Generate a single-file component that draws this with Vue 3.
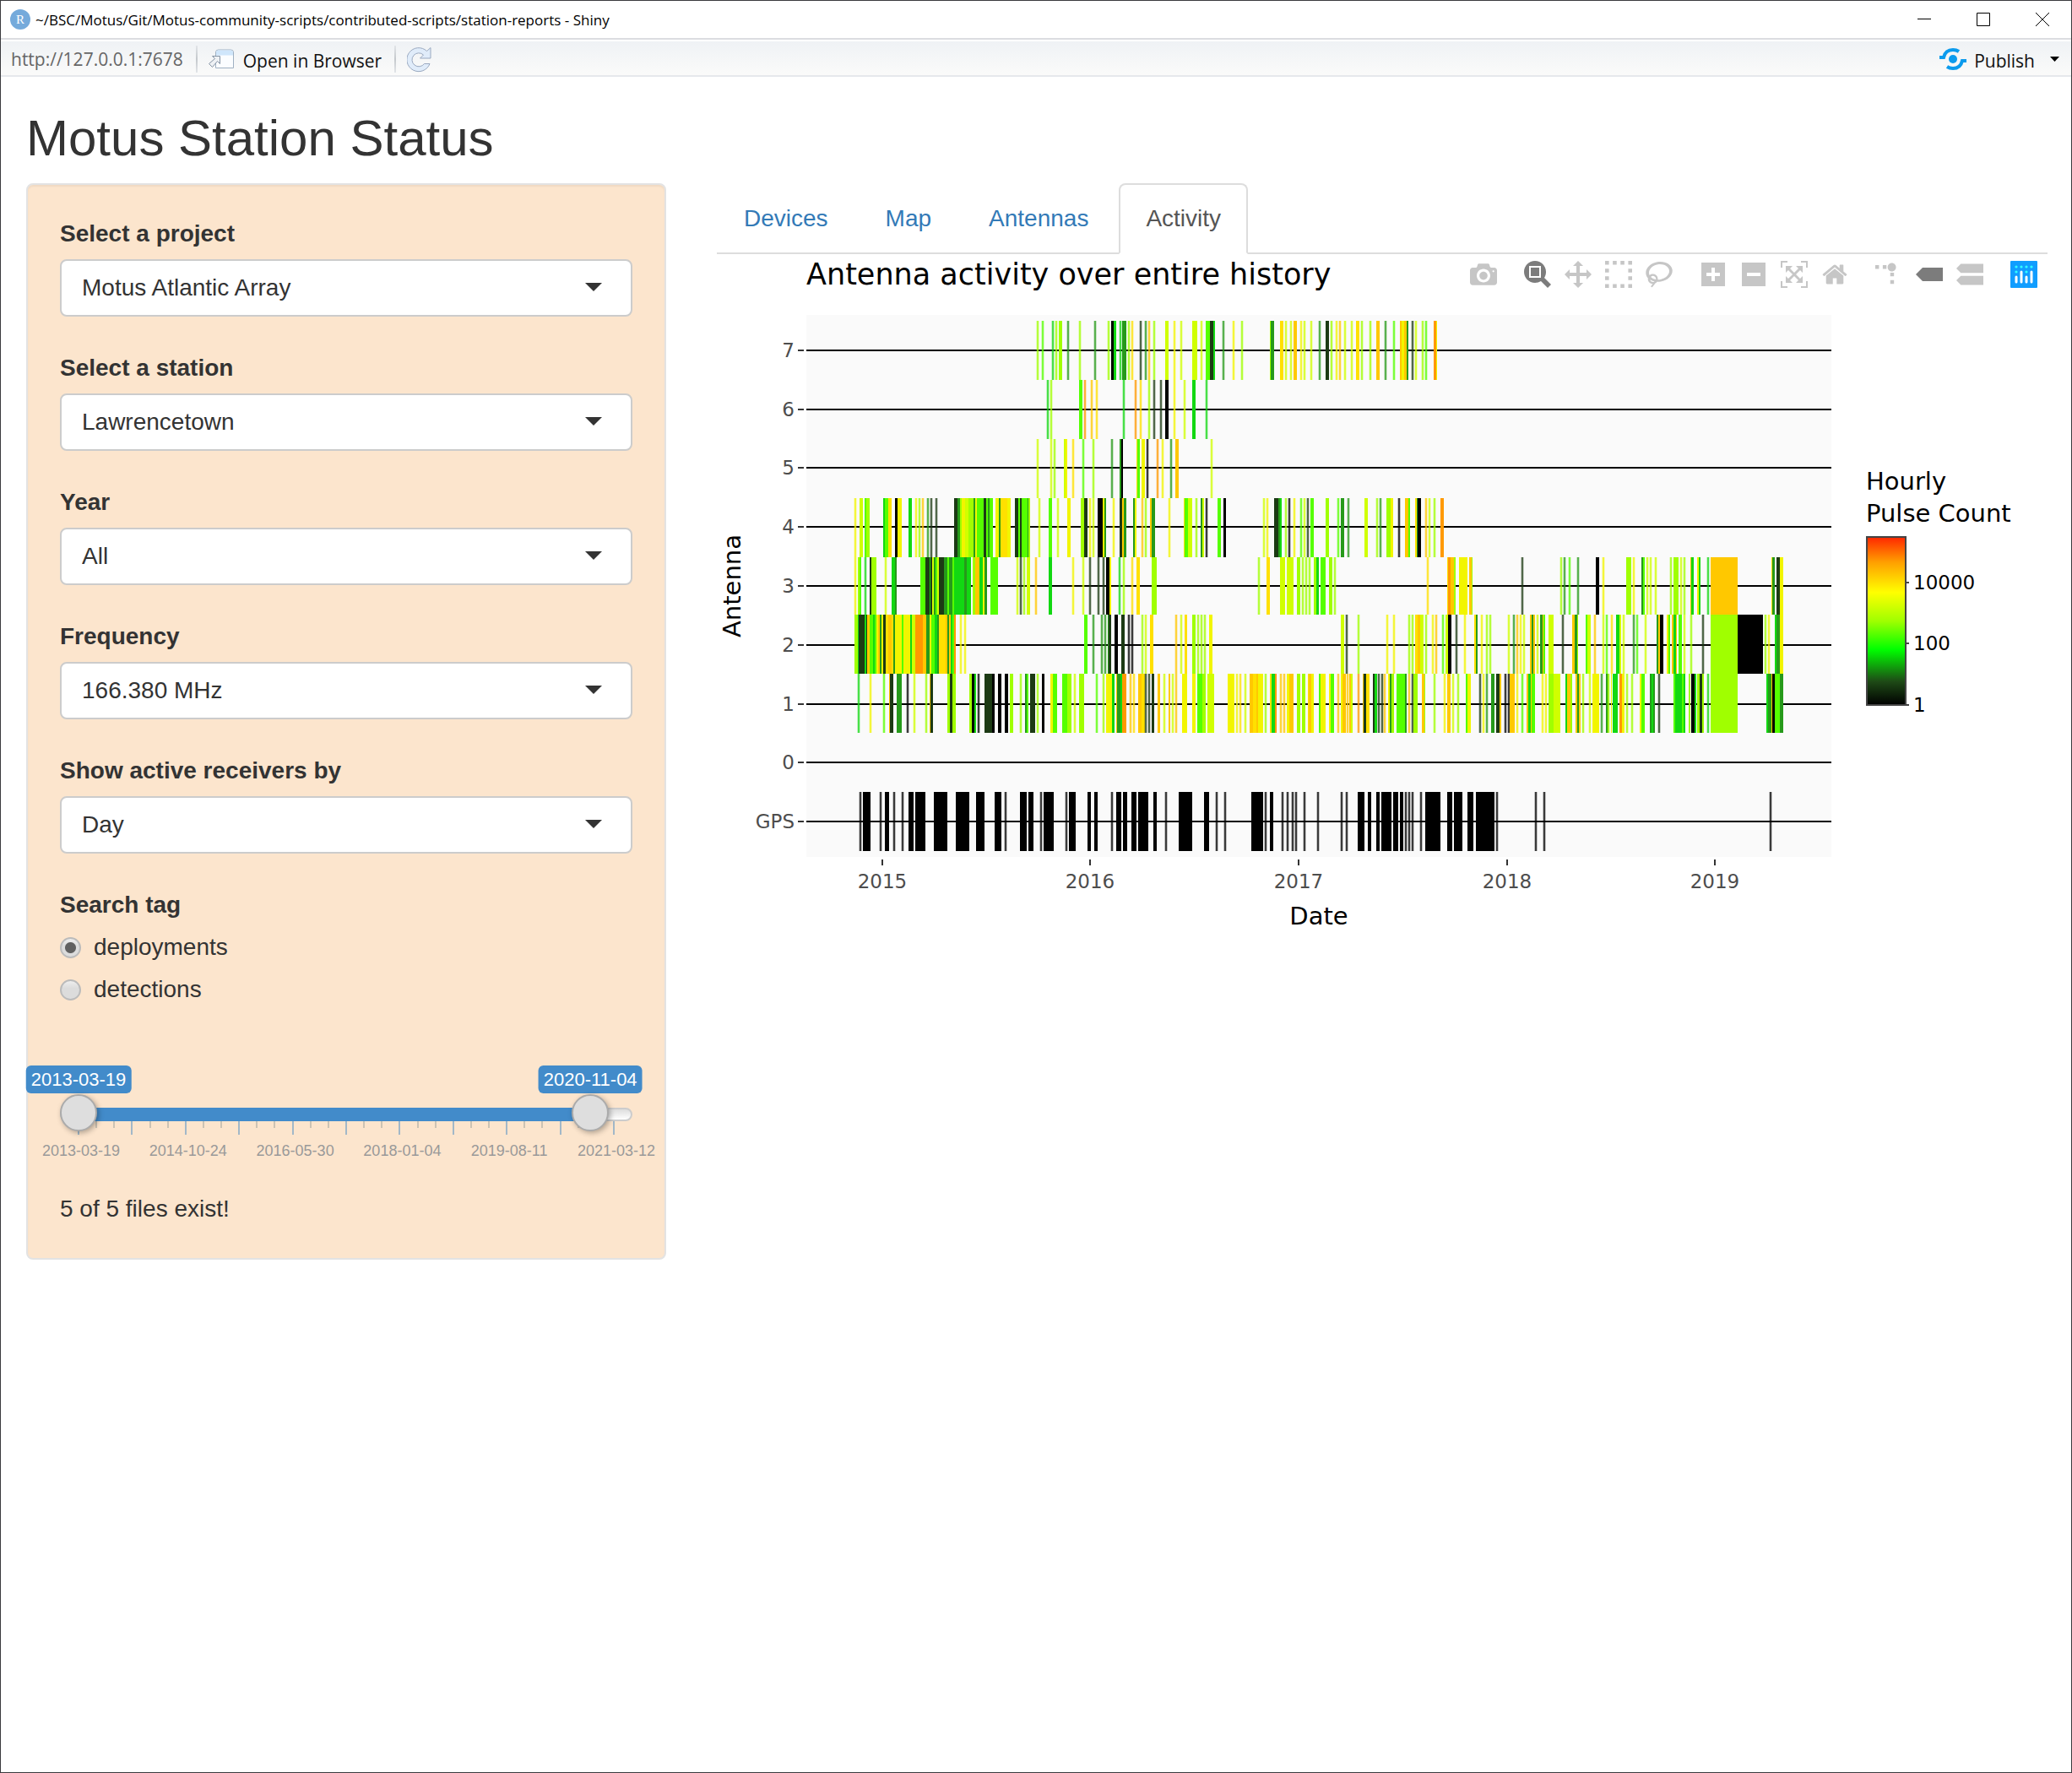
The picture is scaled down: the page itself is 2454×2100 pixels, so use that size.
<script setup>
import { ref, computed } from 'vue'

const fields = [
  { id: 'project', label: 'Select a project', value: 'Motus Atlantic Array' },
  { id: 'station', label: 'Select a station', value: 'Lawrencetown' },
  { id: 'year', label: 'Year', value: 'All' },
  { id: 'frequency', label: 'Frequency', value: '166.380 MHz' },
  { id: 'interval', label: 'Show active receivers by', value: 'Day' },
]

const searchTag = ref('deployments')

/* Date range slider, counted in days since the first date */
const firstDay = Date.UTC(2013, 2, 19)
const totalDays = 2915
const from = ref(0)
const to = ref(2787)
const isoDate = (days) => new Date(firstDay + days * 86400000).toISOString().slice(0, 10)
const share = (days) => days / totalDays
const thumbLeft = (days) => `calc(22px + (100% - 44px) * ${share(days)})`
const rangeStyle = computed(() => ({
  left: thumbLeft(from.value),
  right: `calc(22px + (100% - 44px) * ${1 - share(to.value)})`,
}))
const ticks = Array.from({ length: 31 }, (_, i) => ({ left: (i / 30) * 100 + '%', major: i % 3 === 0 }))
const tickLabels = ['2013-03-19', '2014-10-24', '2016-05-30', '2018-01-04', '2019-08-11', '2021-03-12']

const tabs = ['Devices', 'Map', 'Antennas', 'Activity']
const activeTab = 'Activity'

/* Plot toolbar */
const flip = 'matrix(1 0 0 -1 0 850)'
const modebar = [
  [
    { name: 'Download plot as a png', box: '0 0 1000 1000', t: flip, d: 'm500 450c-83 0-150-67-150-150 0-83 67-150 150-150 83 0 150 67 150 150 0 83-67 150-150 150z m400 150h-120c-16 0-34 13-39 29l-31 93c-6 15-23 28-40 28h-340c-16 0-34-13-39-28l-31-94c-6-15-23-28-40-28h-120c-55 0-100-45-100-100v-450c0-55 45-100 100-100h800c55 0 100 45 100 100v450c0 55-45 100-100 100z m-400-550c-138 0-250 112-250 250 0 138 112 250 250 250 138 0 250-112 250-250 0-138-112-250-250-250z m365 380c-19 0-35 16-35 35 0 19 16 35 35 35 19 0 35-16 35-35 0-19-16-35-35-35z' },
  ],
  [
    { name: 'Zoom', on: true, box: '0 0 1000 1000', t: flip, d: 'm1000-25l-250 251c40 63 63 138 63 218 0 224-182 406-407 406-224 0-406-182-406-406s183-406 407-406c80 0 155 22 218 62l250-250 125 125z m-812 250l0 438 437 0 0-438-437 0z m62 375l313 0 0-312-313 0 0 312z' },
    { name: 'Pan', box: '0 0 1000 1000', t: flip, d: 'm1000 350l-187 188 0-125-250 0 0 250 125 0-188 187-187-187 125 0 0-250-250 0 0 125-188-188 186-187 0 125 252 0 0-250-125 0 187-188 188 188-125 0 0 250 250 0 0-126 187 188z' },
    { name: 'Box Select', box: '0 0 1000 1000', t: flip, d: 'm0 850l0-143 143 0 0 143-143 0z m286 0l0-143 143 0 0 143-143 0z m285 0l0-143 143 0 0 143-143 0z m286 0l0-143 143 0 0 143-143 0z m-857-286l0-143 143 0 0 143-143 0z m857 0l0-143 143 0 0 143-143 0z m-857-285l0-143 143 0 0 143-143 0z m857 0l0-143 143 0 0 143-143 0z m-857-286l0-143 143 0 0 143-143 0z m286 0l0-143 143 0 0 143-143 0z m285 0l0-143 143 0 0 143-143 0z m286 0l0-143 143 0 0 143-143 0z' },
    { name: 'Lasso Select', box: '0 0 1031 1000', t: flip, d: 'm1018 538c-36 207-290 336-568 286-277-48-473-256-436-463 10-57 36-108 76-151-13-66 11-137 68-183 34-28 75-41 114-42l-55-70 0 0c-2-1-3-2-4-3-10-14-8-34 5-45 14-11 34-8 45 4 1 1 2 3 2 5l0 0 113 140c16 11 31 24 45 40 4 3 6 7 8 11 48-3 100 0 151 9 278 48 473 255 436 462z m-624-379c-80 14-149 48-197 96 42 42 109 47 156 9 33-26 47-66 41-105z m-187-74c-19 16-33 37-39 60 50-32 109-55 174-68-42-25-95-24-135 8z m360 75c-34-7-69-9-102-8 8 62-16 128-68 170-73 59-175 54-244-5-9 20-16 40-20 61-28 159 121 317 333 354s407-60 434-217c28-159-121-318-333-355z' },
  ],
  [
    { name: 'Zoom in', box: '0 0 875 1000', t: flip, d: 'm1 787l0-875 875 0 0 875-875 0z m687-500l-187 0 0-187-125 0 0 187-188 0 0 125 188 0 0 187 125 0 0-187 187 0 0-125z' },
    { name: 'Zoom out', box: '0 0 875 1000', t: flip, d: 'm0 788l0-876 875 0 0 876-875 0z m688-500l-500 0 0 125 500 0 0-125z' },
    { name: 'Autoscale', box: '0 0 1000 1000', t: flip, d: 'm250 850l-187 0-63 0 0-62 0-188 63 0 0 188 187 0 0 62z m688 0l-188 0 0-62 188 0 0-188 62 0 0 188 0 62-62 0z m-875-938l0 188-63 0 0-188 0-62 63 0 187 0 0 62-187 0z m875 188l0-188-188 0 0-62 188 0 62 0 0 62 0 188-62 0z m-125 188l-1 0-93-94-156 156 156 156 92-93 2 0 0 250-250 0 0-2 93-92-156-156-156 156 94 92 0 2-250 0 0-250 0 0 93 93 157-156-157-156-93 94 0 0 0-250 250 0 0 0-94 93 156 157 156-157-93-93 0 0 250 0 0 250z' },
    { name: 'Reset axes', box: '0 0 928 1000', t: flip, d: 'm786 296v-267q0-15-11-26t-25-10h-214v214h-143v-214h-214q-15 0-25 10t-11 26v267q0 1 0 2t0 2l321 264 321-264q1-1 1-4z m124 39l-34-41q-5-5-12-6h-2q-7 0-12 3l-386 322-386-322q-7-4-13-4-7 2-12 7l-35 41q-4 5-3 13t6 12l401 334q18 15 42 15t43-15l136-114v109q0 8 5 13t13 5h107q8 0 13-5t5-13v-227l122-102q5-5 6-12t-4-13z' },
  ],
  [
    { name: 'Toggle Spike Lines', box: '0 0 1000 1000', t: 'matrix(1.5 0 0 -1.5 0 850)', d: 'M512 409c0-57-46-104-103-104-57 0-104 47-104 104 0 57 47 103 104 103 57 0 103-46 103-103z m-327-39l92 0 0 92-92 0z m-185 0l92 0 0 92-92 0z m370-186l92 0 0 93-92 0z m0-184l92 0 0 92-92 0z' },
    { name: 'Show closest data on hover', on: true, box: '0 0 1500 1000', t: flip, d: 'm375 725l0 0-375-375 375-374 0-1 1125 0 0 750-1125 0z' },
    { name: 'Compare data on hover', box: '0 0 1125 1000', t: flip, d: 'm187 786l0 2-187-188 188-187 0 0 937 0 0 373-938 0z m0-499l0 1-187-188 188-188 0 0 937 0 0 376-938-1z' },
  ],
]

/* Hourly pulse count colours, black (1) to orange (over 10000) */
const shades = {
  k: '#000', K: '#1c3a14', D: '#269a1a', G: '#12d812', g: '#55ff00',
  L: '#a0ff00', l: '#d0ff00', y: '#f2f500', Y: '#ffe000', O: '#ffc800', o: '#ff9900',
}

/* "L746" is a single day, "L821-834" a run of days; both are counted in `unit`ths of a plot pixel */
function parse(start, unit, text) {
  return text.trim().split(/\s+/).map((token) => {
    const [, code, a, b] = token.match(/^([a-zA-Z])(\d+)(?:-(\d+))?$/)
    const x = Math.round((start + Number(a)) / unit)
    if (!b) return { x: x - 1, w: 2, single: true, fill: shades[code] }
    return { x, w: Math.max(1, Math.round((start + Number(b)) / unit) - x), single: false, fill: shades[code] }
  })
}

const activity = [
  { y: 7, h: 70, parts: [
    [75, 3, 'L746 g764 G801 L812 L821-834 D855 L897 D951 L998 k1007-1017 G1017-1026 G1040 D1048-1062 L1070 Y1082'],
    [1155, 3, 'K33 D51 O63 L81 l120-132 y153 l177 l216-234 l249 g263-280 K280-291 G291-298 D326 y363 L393 L492-496 D496-508 Y528-540 l549 l567 O576-588 y602 l614 l639 D669 K689-702 L711 y728 O741 l759 l783 Y798-810 L819 L849 O870-882 D903 g933 O954-960 y960-970 O970-978 D978-985 K999 l1011 L1035 g1047 o1074-1083 y1083-1086'],
  ] },
  { y: 77, h: 70, parts: [
    [75, 3, 'G782 L795 g894-906 o915 O939 Y957 G1053'],
    [1155, 3, 'o15 Y33 L63 K81 K105 k120-132 y153 l189 G216-228 G267'],
  ] },
  { y: 147, h: 70, parts: [
    [75, 3, 'l746 l795 L806 l840-846 y846-852 Y873 g909 L945 D1011 D1039-1043 k1043-1050'],
    [1155, 3, 'Y18-22 g22-30 y36-48 k57 o93 y111 D141 O155-168 l285'],
  ] },
  { y: 217, h: 70, parts: [
    [75, 3, 'y99 l114-126 g132-138 L138-150 G198-204 g204-216 Y216-228 k240-250 y250-264 G288-299 y314 L327 O339 D357 K369 K387 K451-462 D462-470 L470-476 y476-488 l488-500 L500-518 D518-526 y526-532 g532-556 K556-564 g564-570 D570-576 g576-588 y596-610 D610-616 Y616-638 y638-652 K665-678 g678-684 K684-690 g690-710 D710-714 L714-720 l753 g786-798 l819 y852-864 L900-912 K912-924 y933 l945 k961-978 y978-984 D984-990 y1017 K1039-1048 O1048-1054 D1054-1063'],
    [1155, 3, 'D6-13 y13-18 O39 L51 O66-72 D72-84 y135 Y186-190 g190-200 l200-216 L231 D246-253 l253-258 k267 g305-318 k328-337 l471 y483 K507-522 D522-528 G528-534 L549 k561 y578 g603 l615 K627 g637-648 L690-702 g735 D743-756 D771 l828-840 L873 D885 L906-921 y921-930 k951 O972-984 g984-990 Y1008-1014 D1014-1018 k1018-1028 O1047 l1059 L1077 o1098-1110'],
  ] },
  { y: 287, h: 68, parts: [
    [75, 3, 'y99 L108-114 g114-120 G135 K150-156 L156-174 l207 G228-240 D240-245 g330-348 K348-362 G362-366 K366-372 l372-378 D378-384 g384-390 l390-396 K396-414 D414-426 g426-432 D432-444 g444-450 G450-486 D486-494 G494-509 L516-524 O524-540 G540-552 y552-558 D558-568 g578-606 l675 K687 L700 l708-720 O741 G786-798 y873 l909 K933 K963 K981 k990-1003 y1003-1008 G1037 L1053'],
    [1155, 3, 'Y3 Y18-30 L72-90 L453 Y480-492 l528-546 l552-576 L588-600 L609 L621 L633 L648-656 G656-666 g672-690 L702-714 L723 Y1053'],
    [2235, 3, 'Y42-46 o46-54 O54-66 L66-72 y84-114 O120-128 L128-132 K309 L447 D459 g477 D507 k570-582 y597 L678-696 y705 D732-738 g738-745 l753 l765 l783 L837 L846-863 l873 L885 O906-910 G910-918 y930-936 G936-942 G969 O978-1074 Y1194-1198 D1198-1206 K1213-1224 y1224-1236'],
  ] },
  { y: 355, h: 70, parts: [
    [75, 3, 'L96-108 G108-112 K112-132 G132-138 K138-142 O142-150 g150-162 G162-168 g168-174 y174-180 O180-186 D186-192 y192-197 K197-206 Y206-216 O216-228 Y228-234 D234-240 y240-264 g264-270 y270-294 G294-300 l300-312 o312-338 O338-352 D352-362 y362-370 g370-382 G382-390 D390-396 Y396-420 O420-426 D426-432 O432-438 G438-444 g444-450 o450-456 y474 y489 g911-924 D945 D975 D987 D996-1000 K1000-1008 k1020-1032 K1045-1056 k1071 k1083'],
    [1155, 3, 'L39 l51 Y66-78 O159 l177 Y189-198 L216-228 L237 L249 L261 y276-288 l743-756 K765 L807 y909 y933 L987 L999 Y1008-1018 O1018-1026 l1026-1038 L1047 y1071 O1083'],
    [2235, 3, 'g27 l36-46 k46-58 K75 y104 Y138-144 D144-150 y165 L183 L195 l261 D279 O291 y303 l315 O336-341 D341-348 O348-354 l363 D372-380 O380-384 g384-390 l402-420 K453 O486-495 D495-504 L504-508 g534-540 l540-552 O567 l597 g609 Y627 G642-653 l653-660 l669 D705 g717 l747 D786-792 O792-798 k798-810 y822-827 g827-834 O840-846 G846-854 O854-858 g864-876 l885 L909 K951 L978-1074 k1074-1164 L1173 y1185 G1206-1212 D1212-1224 y1224-1236'],
  ] },
  { y: 425, h: 70, parts: [
    [75, 3, 'G111 y153 g201 O218-221 K221-234 D246-264 k285 l309 L351 O362-366 K366-376 L427-436 K436-445 L445-456 L504-513 k514-522 G522-528 k537 K558-585 k585-594 k606-618 k630-642 L647-660 L687 D703-708 g708-714 K720-738 L747 k762-772 y792-800 g800-816 g834-852 L852-867 l879 L894-912 g957 L981 y990-1012 G1012-1020 O1026-1030 D1030-1040 G1040-1046 o1046-1062 O1077 Y1089'],
    [1155, 3, 'O24-36 Y36-48 K51 K63 K72-80 O93-101 l117 O132-138 l147 O159 y180-198 y216-228 g234-252 L252-264 l270-294 y342-366 y375 Y387 l405 O420-432 Y432-444 O444-450 y450-468 L477 Y492-498 G498-510 o510-516 O531 O543 y552-560 O560-576 L588-600 L606-618 Y626-630 O630-638 y638-648 g666-672 y672-690 y702-708 g708-720 O735 y744-750 O750-762 O768 O774-780 l780-786 o807 O822-826 K826-834 Y834-846 K858-864 G864-874 K879 K891 O900 y912-918 D918-924 L924-934 g942-972 D972-978 O987 K999 L1003-1018 O1032-1040 L1040-1043 L1077'],
    [2235, 3, 'y33 O42-54 l63 L81 g108-115 y115-126 K159 y171 D183 D198-210 K216-228 O228-233 k249 k261 O264-282 y291 g309 O324-330 G330-338 O338-342 g342-354 y381 y393 L402-420 l420-444 G462-468 O468-480 L480-486 O498-504 D504-510 O510-516 L525 l549 y558-582 D591 D606-614 L615 y624-628 G630-648 o654-662 y662-672 L681 L699 y726-733 g733-744 D762-768 G768-774 D774-780 K795 g846-852 G852-876 g876-882 G882-888 L900-906 k908-922 G922-926 L930-938 K938-948 L948-954 G969 L978-1074 G1176-1182 D1182-1194 O1194-1198 k1198-1206 g1206-1224 D1224-1236'],
  ] },
  { y: 565, h: 70, parts: [
    [0, 1, 'k64 k67-76 k88 k93-98 k104 k114 k121-127 k129-141 k151-167 k177-193 k201-211 k223-231 k236 k253-261 k263-269 k278 k281-293 k308 k311-319 k333-337 k341-345 k362 k367-373 k375-380 k385-391 k393-405 k411-415 k426 k441-457 k471-477 k486 k496 k527-541 k544 k549-553 k564 k570 k576 k580 k590 k606 k634 k640 k653-661 k665-669 k675-679 k681-693 k695-701 k703-707 k710 k714 k718 k728 k733-751 k759-765 k767-777 k783-790 k793-815 k818 k864 k874 k1142'],
  ] },
].map((row) => ({ ...row, bars: row.parts.flatMap((p) => parse(...p)) }))

const rows = [
  { name: '7', y: 42 }, { name: '6', y: 112 }, { name: '5', y: 181 }, { name: '4', y: 251 }, { name: '3', y: 321 },
  { name: '2', y: 391 }, { name: '1', y: 461 }, { name: '0', y: 530 }, { name: 'GPS', y: 600 },
]
const years = [
  { name: '2015', x: 90 }, { name: '2016', x: 336 }, { name: '2017', x: 583 }, { name: '2018', x: 830 }, { name: '2019', x: 1076 },
]
const legend = [{ name: '10000', y: 54 }, { name: '100', y: 126 }, { name: '1', y: 199 }]
</script>

<template>
  <div class="window">
    <header class="titlebar">
      <svg class="app-icon" viewBox="0 0 24 24" aria-hidden="true">
        <circle cx="12" cy="12" r="12" fill="#75aadb" />
        <text x="12" y="17" text-anchor="middle" class="app-letter">R</text>
      </svg>
      <span class="window-title">~/BSC/Motus/Git/Motus-community-scripts/contributed-scripts/station-reports - Shiny</span>
      <div class="window-buttons">
        <button type="button" aria-label="Minimize"><svg viewBox="0 0 16 16"><path d="M0 7.5h16" /></svg></button>
        <button type="button" aria-label="Maximize"><svg viewBox="0 0 16 16"><path d="M.5.5h15v15H.5z" /></svg></button>
        <button type="button" aria-label="Close"><svg viewBox="0 0 16 16"><path d="M0 0l16 16M16 0L0 16" /></svg></button>
      </div>
    </header>

    <div class="toolbar">
      <span class="url">http://127.0.0.1:7678</span>
      <span class="divider"></span>
      <button type="button" class="tool open">
        <svg width="30" height="24" viewBox="0 0 30 24" aria-hidden="true">
          <path d="M8.500 22.500V4q0-3 3-3h15q3 0 3 3v18.500z" fill="#fbfdff" stroke="#9fb0c2" />
          <path d="M9 7.500V4q0-2.500 2.500-2.500h15q2.500 0 2.500 2.500v3.500z" fill="#cfe6fb" />
          <path d="M4.500 8.500h9v9l-3-3-6 7-4-4 7-6z" fill="#eef1f4" stroke="#8493a4" />
        </svg>
        <span>Open in Browser</span>
      </button>
      <span class="divider"></span>
      <button type="button" class="tool reload" aria-label="Reload">
        <svg width="29" height="31" viewBox="0 0 29 31" aria-hidden="true">
          <path d="M23.500 5.500L28 1.500V14H15.500L19.500 10A8 8 0 1 0 20.500 20.500H27A14 14 0 1 1 23.500 5.500z" fill="#e0ecfa" stroke="#9aa9c0" />
        </svg>
      </button>
      <button type="button" class="tool publish">
        <svg width="32" height="26" viewBox="0 0 32 26" aria-hidden="true" fill="none" stroke="#0c9bed" stroke-width="4">
          <circle cx="16" cy="13" r="5" fill="#0c9bed" stroke="none" />
          <path d="M0 11h5q2-9 11-9 4 0 7 2" />
          <path d="M32 15h-5q-2 9-11 9-4 0-7-2" />
        </svg>
        <span>Publish</span>
        <svg class="publish-caret" width="11" height="6" viewBox="0 0 11 6" aria-hidden="true"><path d="M0 0h11L5.500 6z" /></svg>
      </button>
    </div>

    <main class="page">
      <h1>Motus Station Status</h1>
      <div class="columns">
        <form class="well" @submit.prevent>
          <div v-for="f in fields" :key="f.id" class="field">
            <label :for="f.id">{{ f.label }}</label>
            <div class="select-wrap">
              <select :id="f.id"><option>{{ f.value }}</option></select>
            </div>
          </div>

          <fieldset class="radios">
            <legend>Search tag</legend>
            <label v-for="tag in ['deployments', 'detections']" :key="tag">
              <input v-model="searchTag" type="radio" name="tag" :value="tag">
              {{ tag }}
            </label>
          </fieldset>

          <div class="slider">
            <div class="bubbles">
              <output class="bubble" :style="{ left: thumbLeft(from) }">{{ isoDate(from) }}</output>
              <output class="bubble" :style="{ left: thumbLeft(to) }">{{ isoDate(to) }}</output>
            </div>
            <div class="rail">
              <div class="track"></div>
              <div class="range" :style="rangeStyle"></div>
              <div class="ticks">
                <span v-for="(t, i) in ticks" :key="i" class="tick" :class="{ major: t.major }" :style="{ left: t.left }"></span>
              </div>
              <input v-model.number="from" type="range" min="0" :max="totalDays" aria-label="Start date">
              <input v-model.number="to" type="range" min="0" :max="totalDays" aria-label="End date">
            </div>
            <div class="tick-labels">
              <span v-for="t in tickLabels" :key="t"><span>{{ t }}</span></span>
            </div>
          </div>

          <p class="status">5 of 5 files exist!</p>
        </form>

        <section class="content">
          <nav class="tabs">
            <a v-for="t in tabs" :key="t" href="#" :class="{ active: t === activeTab }">{{ t }}</a>
          </nav>

          <div class="chart">
            <svg class="plot" viewBox="0 0 1576 820" role="img" aria-label="Antenna activity over entire history">
              <defs>
                <linearGradient id="pulse" x1="0" y1="1" x2="0" y2="0">
                  <stop offset="0" stop-color="#000" />
                  <stop offset=".14" stop-color="#1e4a16" />
                  <stop offset=".33" stop-color="#0f0" />
                  <stop offset=".5" stop-color="#a0ff00" />
                  <stop offset=".67" stop-color="#ff0" />
                  <stop offset=".85" stop-color="#ff9f00" />
                  <stop offset="1" stop-color="#ff2600" />
                </linearGradient>
              </defs>
              <text class="title" x="106" y="36">Antenna activity over entire history</text>

              <g transform="translate(106 72)">
                <rect width="1214" height="642" fill="#fafafa" />
                <rect v-for="r in rows" :key="r.name" :y="r.y - 1" width="1214" height="2" />
                <g shape-rendering="crispEdges">
                  <g v-for="row in activity" :key="row.y">
                    <template v-for="(b, i) in row.bars" :key="i">
                      <rect v-if="b.single" :x="b.x - 1" :y="row.y" width="4" :height="row.h" :fill="b.fill" opacity=".22" />
                      <rect :x="b.x" :y="row.y" :width="b.w" :height="row.h" :fill="b.fill" :opacity="b.single ? 0.7 : 1" />
                    </template>
                  </g>
                </g>
                <g v-for="r in rows" :key="r.name">
                  <rect x="-10" :y="r.y - 1" width="7" height="2" fill="#333" />
                  <text class="tick-text" x="-14" :y="r.y + 8" text-anchor="end">{{ r.name }}</text>
                </g>
                <g v-for="yr in years" :key="yr.name">
                  <rect :x="yr.x - 1" y="645" width="2" height="7" fill="#333" />
                  <text class="tick-text" :x="yr.x" y="679" text-anchor="middle">{{ yr.name }}</text>
                </g>
                <text class="axis-text" x="607" y="722" text-anchor="middle">Date</text>
                <text class="axis-text" transform="translate(-78 321) rotate(-90)" text-anchor="middle">Antenna</text>
              </g>

              <g transform="translate(1361 334)">
                <text class="axis-text" x="0" y="-55">Hourly</text>
                <text class="axis-text" x="0" y="-17">Pulse Count</text>
                <rect x="1" y="1" width="46" height="199" fill="url(#pulse)" stroke="#444" stroke-width="2" />
                <g v-for="l in legend" :key="l.name">
                  <rect x="47" :y="l.y" width="4" height="2" fill="#444" />
                  <text class="legend-text" x="56" :y="l.y + 9">{{ l.name }}</text>
                </g>
              </g>
            </svg>

            <div class="modebar">
              <div v-for="(group, g) in modebar" :key="g" class="mode-group">
                <button v-for="b in group" :key="b.name" type="button" :class="{ on: b.on }" :aria-label="b.name">
                  <svg :viewBox="b.box"><path :transform="b.t" :d="b.d" fill="currentColor" /></svg>
                </button>
              </div>
              <div class="mode-group">
                <button type="button" aria-label="Produced with Plotly">
                  <svg viewBox="0 0 32 32">
                    <rect width="32" height="32" rx="1" fill="#119dff" />
                    <g fill="#3ff">
                      <circle cx="7" cy="7" r="1.600" /><circle cx="13" cy="7" r="1.600" /><circle cx="19" cy="7" r="1.600" /><circle cx="25" cy="7" r="1.600" />
                      <circle cx="7" cy="13" r="1.600" /><circle cx="19" cy="13" r="1.600" />
                    </g>
                    <path d="M7 19v6M13 13v12M19 19v6M25 13v12" stroke="#fff" stroke-width="3" stroke-linecap="round" />
                  </svg>
                </button>
              </div>
            </div>
          </div>
        </section>
      </div>
    </main>
  </div>
</template>

<style>
body {
  margin: 0;
  background: #fff;
}
</style>

<style scoped>
* {
  box-sizing: border-box;
}
.window {
  min-height: 100vh;
  border: 1px solid #3a3a3e;
  background: #fff;
  color: #333;
  font: 28px/40px "Liberation Sans", Arial, sans-serif;
}
button {
  border: 0;
  padding: 0;
  background: none;
  color: inherit;
  font: inherit;
}
svg {
  display: block;
}

/* Window chrome */
.titlebar {
  display: flex;
  align-items: center;
  height: 46px;
  padding: 0 26px 0 11px;
  border-bottom: 2px solid #dcdde1;
  color: #000;
  font: 17px/24px "Open Sans", "Noto Sans", sans-serif;
}
.app-icon {
  width: 24px;
  height: 24px;
  margin-right: 6px;
}
.app-letter {
  fill: #fff;
  font: 15px "Liberation Serif", serif;
}
.window-title {
  flex: 1;
  padding-top: 2px;
}
.window-buttons {
  display: flex;
  gap: 54px;
}
.window-buttons svg {
  width: 16px;
  height: 16px;
  fill: none;
  stroke: #000;
}
.toolbar {
  display: flex;
  align-items: center;
  height: 44px;
  padding: 4px 9px 0 12px;
  border-bottom: 2px solid #e6e8ec;
  background: linear-gradient(#eff2f5, #fbfbfa) 0 2px no-repeat;
  color: #111;
  font: 21px/28px "Open Sans", "Noto Sans", sans-serif;
}
.url {
  color: #666;
}
.divider {
  width: 2px;
  height: 32px;
  margin: 0 13px 0 15px;
  background: linear-gradient(#e2e5e8, #c4c8cc, #e2e5e8);
}
.tool {
  display: flex;
  align-items: center;
}
.tool span {
  padding-top: 4px;
}
.open svg {
  margin-right: 11px;
}
.publish {
  margin-left: auto;
}
.publish svg {
  margin-right: 9px;
}
.publish .publish-caret {
  margin: 0 5px 0 18px;
}

/* Page */
.page {
  padding: 40px 28px 40px 30px;
}
h1 {
  margin: 0 0 20px;
  font-size: 60px;
  font-weight: 400;
  line-height: 66px;
}
.columns {
  display: grid;
  grid-template-columns: minmax(0, 758fr) minmax(0, 1576fr);
  gap: 60px;
  align-items: start;
}
.well {
  padding: 38px;
  border: 2px solid #e3e3e3;
  border-radius: 8px;
  background: #fce5cd;
  box-shadow: inset 0 2px 2px rgba(0, 0, 0, .05);
}
.field {
  display: flex;
  flex-direction: column;
  gap: 10px;
  margin-bottom: 41px;
}
.field label,
.radios legend {
  font-weight: 700;
}
.select-wrap {
  position: relative;
}
.select-wrap::after {
  content: "";
  position: absolute;
  top: 28px;
  right: 36px;
  border: 10px solid transparent;
  border-top-color: #333;
  border-bottom-width: 0;
  pointer-events: none;
}
select {
  display: block;
  width: 100%;
  height: 68px;
  padding: 0 60px 0 24px;
  border: 2px solid #ccc;
  border-radius: 8px;
  appearance: none;
  background: #fff;
  color: #333;
  font: inherit;
}
.radios {
  display: flex;
  flex-direction: column;
  margin: 0;
  padding: 0;
  border: 0;
}
.radios legend {
  margin-bottom: 10px;
  padding: 0;
}
.radios label {
  display: flex;
  align-items: center;
  gap: 15px;
  margin-bottom: 10px;
}
.radios input {
  width: 25px;
  height: 25px;
  margin: 0;
  border: 2px solid #bbb;
  border-radius: 50%;
  appearance: none;
  background: linear-gradient(#eee, #dcdcdc 40%);
}
.radios input:checked {
  background: radial-gradient(circle, #606060 6px, transparent 7px), linear-gradient(#eee, #dcdcdc 40%);
}

/* Slider */
.slider {
  margin: 60px 0 37px;
}
.bubbles {
  position: relative;
  height: 34px;
}
.bubble {
  position: absolute;
  top: 0;
  padding: 2px 6px;
  border-radius: 6px;
  background: #428bca;
  color: #fff;
  font-size: 22px;
  line-height: 29px;
  white-space: nowrap;
  transform: translateX(-50%);
}
.rail {
  position: relative;
  height: 48px;
}
.track,
.range {
  position: absolute;
  top: 16px;
  height: 16px;
}
.track {
  left: 0;
  right: 0;
  border: 2px solid #ccc;
  border-radius: 8px;
  background: linear-gradient(#ddd, #fff);
}
.range {
  background: #428bca;
}
.ticks {
  position: absolute;
  top: 32px;
  left: 21px;
  right: 23px;
}
.tick {
  position: absolute;
  width: 2px;
  height: 8px;
  background: #ccc3b4;
}
.tick.major {
  height: 16px;
  background: #a2b8c8;
}
.rail input {
  position: absolute;
  top: 0;
  left: 0;
  width: 100%;
  height: 44px;
  margin: 0;
  appearance: none;
  background: none;
  pointer-events: none;
}
.rail input::-webkit-slider-thumb {
  width: 44px;
  height: 44px;
  border: 2px solid #ababab;
  border-radius: 50%;
  appearance: none;
  background: #dedede;
  box-shadow: 2px 2px 6px rgba(0, 0, 0, .3);
  pointer-events: auto;
}
.tick-labels {
  display: flex;
  justify-content: space-between;
  padding: 7px 19px 0 25px;
  color: #999;
  font-size: 18px;
  line-height: 24px;
}
.tick-labels > span {
  display: flex;
  justify-content: center;
  width: 0;
  white-space: nowrap;
}
.status {
  margin: 0;
}

/* Tabs */
.tabs {
  display: flex;
  gap: 4px;
  border-bottom: 2px solid #ddd;
}
.tabs a {
  margin-bottom: -2px;
  padding: 20px 30px;
  border: 2px solid transparent;
  border-radius: 8px 8px 0 0;
  color: #337ab7;
  text-decoration: none;
}
.tabs a.active {
  border-color: #ddd #ddd #fff;
  background: #fff;
  color: #555;
}

/* Chart */
.chart {
  position: relative;
}
.plot {
  width: 100%;
  height: auto;
}
.plot text {
  font-family: "DejaVu Sans", Verdana, sans-serif;
}
.plot .title {
  font-size: 35px;
}
.plot .axis-text {
  font-size: 29px;
}
.plot .tick-text {
  fill: #4d4d4d;
  font-size: 23px;
}
.plot .legend-text {
  font-size: 23px;
}
.modebar {
  position: absolute;
  top: 8px;
  right: 4px;
  display: flex;
  gap: 16px;
}
.mode-group {
  display: flex;
}
.modebar button {
  padding: 0 8px;
  color: #c6c6c6;
}
.modebar button.on {
  color: #7c7c7c;
}
.modebar svg {
  width: 32px;
  height: 32px;
}
</style>
